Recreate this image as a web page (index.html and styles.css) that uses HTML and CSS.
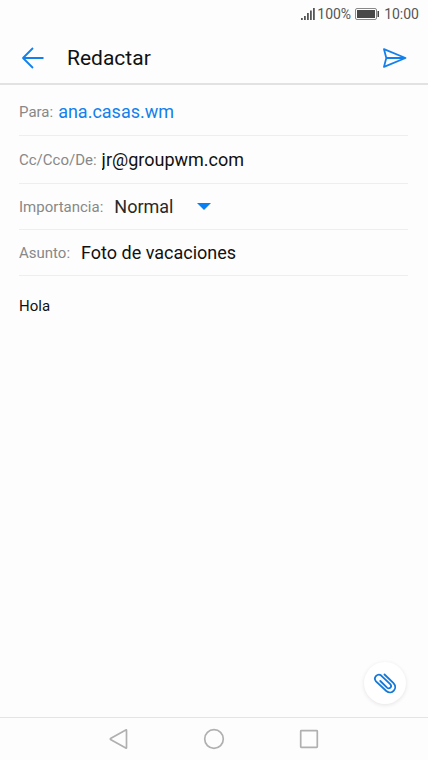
FILE: index.html
```html
<!DOCTYPE html>
<html lang="es">
<head>
<meta charset="utf-8">
<meta name="viewport" content="width=device-width, initial-scale=1">
<title>Redactar</title>
<link rel="stylesheet" href="styles.css">
</head>
<body>
<div class="status">
  <svg width="14" height="14" viewBox="0 0 14 14" fill="#555" aria-hidden="true"><path d="M0 11h1.800v2H0zM3 9h1.800v4H3zM6 6h1.800v7H6zM9 3.500h1.800V13H9zM12 1h1.800v12H12z"/></svg>
  <span class="percent">100%</span>
  <svg class="battery" width="25" height="12" viewBox="0 0 25 12" aria-hidden="true"><rect x=".5" y=".5" width="21" height="11" rx="1.500" fill="none" stroke="#888"/><path fill="#484848" d="M2 2h18v8H2zM22.500 3H24v6h-1.500z"/></svg>
  <span>10:00</span>
</div>
<header class="header">
  <button class="icon-button" type="button" aria-label="Atrás">
    <svg width="24" height="24" viewBox="0 0 24 24"><path d="M12 2 2 12l10 10M2 12h20.500"/></svg>
  </button>
  <h1 class="title">Redactar</h1>
  <button class="icon-button" type="button" aria-label="Enviar">
    <svg width="24" height="24" viewBox="0 0 24 24"><path d="M1 3.200 22.500 12 1 20.800 3.300 12zM3.300 12H22"/></svg>
  </button>
</header>
<main class="compose">
  <form class="form">
    <div class="row row-first">
      <label for="to">Para:</label>
      <input class="recipient" id="to" type="text" value="ana.casas.wm">
    </div>
    <div class="row">
      <label for="from">Cc/Cco/De:</label>
      <input id="from" type="text" value="jr@groupwm.com">
    </div>
    <div class="row row-wide">
      <label for="priority">Importancia:</label>
      <div class="select">
        <select id="priority"><option>Normal</option></select>
        <svg width="14" height="7" viewBox="0 0 14 7" aria-hidden="true"><path fill="#087ff5" d="M0 0h14L7 7z"/></svg>
      </div>
    </div>
    <div class="row row-wide">
      <label for="subject">Asunto:</label>
      <input id="subject" type="text" value="Foto de vacaciones">
    </div>
    <textarea class="message" aria-label="Mensaje">Hola</textarea>
  </form>
  <button class="attach" type="button" aria-label="Adjuntar">
    <svg width="24" height="24" viewBox="0 0 24 24"><path d="M11.500 2.500 20.500 11.200C25.200 16.200 19 23.600 13.300 19L3 9.300C-.2 5.600 4.700.5 8.500 3.800L17.200 12.200C19.600 14.800 16.400 17.700 14 15.600L7.300 9"/></svg>
  </button>
</main>
<nav class="nav">
  <button class="icon-button" type="button" aria-label="Volver"><svg width="24" height="24" viewBox="0 0 24 24"><path d="M19.500 3.200v17.600q0 .7-.7.300L3.500 12.400q-.6-.4 0-.8L18.800 2.900q.7-.4.700.3z"/></svg></button>
  <button class="icon-button" type="button" aria-label="Inicio"><svg width="24" height="24" viewBox="0 0 24 24"><circle cx="12" cy="12" r="9.300"/></svg></button>
  <button class="icon-button" type="button" aria-label="Recientes"><svg width="24" height="24" viewBox="0 0 24 24"><rect x="3.700" y="3.700" width="16.600" height="16.600" rx=".6"/></svg></button>
</nav>
</body>
</html>
```
FILE: styles.css
```css
* {
  box-sizing: border-box;
}

body {
  margin: 0;
  min-height: 100vh;
  display: flex;
  flex-direction: column;
  background: #fdfdfd;
  color: #111;
  font-family: Roboto, "Liberation Sans", sans-serif;
}

button, input, select, textarea {
  margin: 0;
  padding: 0;
  border: 0;
  outline: 0;
  background: none;
  color: inherit;
  font: inherit;
}

svg {
  display: block;
  flex: none;
}

.status {
  display: flex;
  align-items: center;
  justify-content: flex-end;
  height: 28px;
  padding: 0 9px;
  color: #555;
  font-size: 14px;
}

.percent {
  margin-left: 2px;
}

.battery {
  margin: 0 4px;
}

.header {
  display: flex;
  align-items: center;
  height: 57px;
  padding: 4px 21px 0;
  border-bottom: 2px solid #e2e2e2;
}

.icon-button {
  display: flex;
  fill: none;
  stroke: #1480ec;
  stroke-width: 1.8;
  stroke-linejoin: round;
}

.title {
  flex: 1;
  margin: 0 22px;
  font-size: 21px;
  font-weight: 400;
  line-height: 24px;
}

.compose {
  position: relative;
  flex: 1;
  display: flex;
}

.form {
  flex: 1;
  display: flex;
  flex-direction: column;
  padding: 3px 20px 0 19px;
}

.row {
  display: flex;
  align-items: center;
  gap: 5px;
  height: 48px;
  border-bottom: 1px solid #eee;
  font-size: 18px;
}

.row-wide {
  gap: 11px;
  height: 46px;
}

.row label {
  color: #888;
  font-size: 15px;
}

.row input {
  flex: 1;
  min-width: 0;
}

.row .recipient {
  color: #1480ec;
}

.select {
  display: grid;
  align-items: center;
  width: 97px;
  color: #292929;
}

.select select, .select svg {
  grid-area: 1 / 1;
}

.select select {
  appearance: none;
}

.select svg {
  justify-self: end;
  pointer-events: none;
}

.message {
  flex: 1;
  padding: 20px 0;
  resize: none;
  font-size: 15px;
  line-height: 20px;
}

.attach {
  position: absolute;
  right: 22px;
  bottom: 13px;
  display: grid;
  place-items: center;
  width: 42px;
  height: 42px;
  padding-top: 2px;
  border-radius: 50%;
  background: #fff;
  box-shadow: 0 1px 4px #0000001a;
  fill: none;
  stroke: #1478d8;
  stroke-width: 1.8;
  stroke-linecap: round;
}

.nav {
  display: flex;
  align-items: center;
  justify-content: center;
  gap: 71px;
  height: 43px;
  border-top: 1px solid #e4e4e4;
}

.nav .icon-button {
  stroke: #b0b0b0;
  stroke-width: 1.7;
}
```
